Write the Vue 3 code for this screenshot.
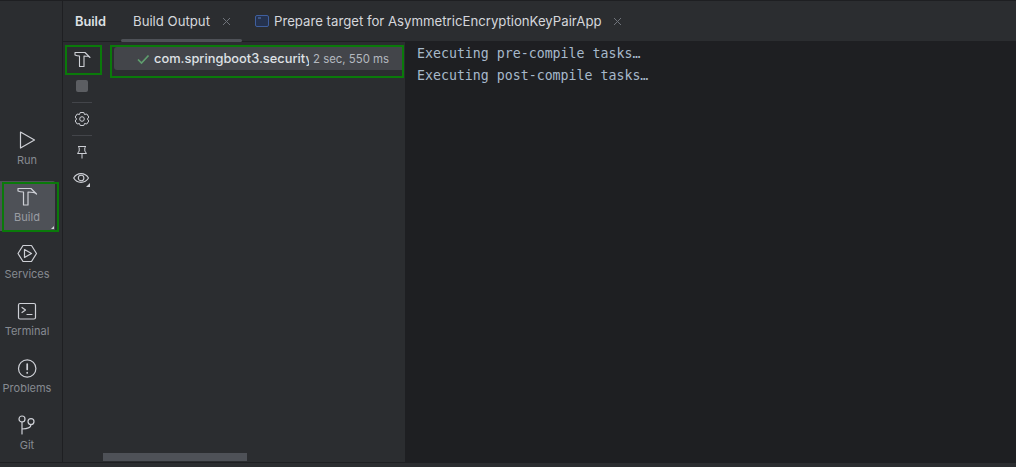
<script setup>
const railItems = [
  { label: 'Run', icon: 'run' },
  { label: 'Build', icon: 'build', active: true },
  { label: 'Services', icon: 'services' },
  { label: 'Terminal', icon: 'terminal' },
  { label: 'Problems', icon: 'problems' },
  { label: 'Git', icon: 'git' }
]
</script>

<template>
  <div class="app">
    <div class="shell">
      <nav class="rail">
        <div v-for="item in railItems" :key="item.label" class="rail-item" :class="{ active: item.active }">
          <svg class="rail-icon" width="22" height="22" viewBox="0 0 22 22" fill="none" stroke="#ced0d6" stroke-width="1.2" stroke-linejoin="round" stroke-linecap="round">
            <path v-if="item.icon === 'run'" d="M4.5 4 L18.5 12 L4.5 20 Z" />
            <path v-else-if="item.icon === 'build'" d="M2 3.5 H15 L20.5 9 C19 7.5 17 7 12 7 V20 H7.5 V7 C5 7 3 6.5 2 6 Z" />
            <template v-else-if="item.icon === 'services'">
              <path d="M7 3.5 H15.5 L20.5 11.5 L15.5 19.5 H7 L2 11.5 Z" />
              <path d="M8.5 7.5 L15.5 11.5 L8.5 15.5 Z" />
            </template>
            <template v-else-if="item.icon === 'terminal'">
              <rect x="2.5" y="4.5" width="17" height="15.5" rx="1.5" />
              <path d="M6 8.5 L9.5 11 L6 13.5 M11 15.5 H16" />
            </template>
            <template v-else-if="item.icon === 'problems'">
              <circle cx="11.2" cy="12.5" r="8.7" />
              <path d="M11.2 8 V13.5 M11.2 16.5 V16.9" stroke-width="1.7" />
            </template>
            <template v-else>
              <circle cx="6" cy="6" r="3" />
              <circle cx="15" cy="8.6" r="3" />
              <path d="M6 9 V21 M6 16 C11 16 15 15.5 15 11.6" />
            </template>
          </svg>
          <span class="rail-label">{{ item.label }}</span>
          <span v-if="item.active" class="rail-mark"></span>
        </div>
      </nav>

      <main class="panel">
        <header class="tabs">
          <span class="title">Build</span>
          <div class="tab selected">
            <span>Build Output</span>
            <svg class="close" width="9" height="9" viewBox="0 0 9 9" stroke="#6f737a" stroke-width="1"><path d="M1 1 L8 8 M8 1 L1 8" /></svg>
          </div>
          <div class="tab second">
            <svg class="tab-icon" width="14" height="12" viewBox="0 0 14 12" fill="#25324d" stroke="#3f5f9e" stroke-width="1"><rect x=".5" y=".5" width="13" height="11" rx="1.5" /><path d="M3 3 H6" stroke="#5a7bb8" /></svg>
            <span>Prepare target for AsymmetricEncryptionKeyPairApp</span>
            <svg class="close" width="9" height="9" viewBox="0 0 9 9" stroke="#6f737a" stroke-width="1"><path d="M1 1 L8 8 M8 1 L1 8" /></svg>
          </div>
        </header>

        <div class="body">
          <aside class="tools">
            <div class="hammer">
              <svg width="18" height="18" viewBox="0 0 18 18" fill="none" stroke="#ced0d6" stroke-width="1.1" stroke-linejoin="round"><path d="M1 1.5 H11 L16 6.5 C15 5.2 13 5 10 5 V15.5 H5.5 V5 C3.5 5 2 4.5 1 4 Z" /></svg>
            </div>
            <div class="stop"></div>
            <div class="sep"></div>
            <svg class="tool-icon" width="16" height="16" viewBox="0 0 16 16" fill="none" stroke="#ced0d6" stroke-width="1" stroke-linejoin="round"><path d="M6.2 1.5 H9.8 L10.5 3.5 L12.8 3 L14.8 6 L13.4 8 L14.8 10 L12.8 13 L10.5 12.5 L9.8 14.5 H6.2 L5.5 12.5 L3.2 13 L1.2 10 L2.6 8 L1.2 6 L3.2 3 L5.5 3.5 Z" /><circle cx="8" cy="8" r="2.3" /></svg>
            <div class="sep second-sep"></div>
            <svg class="tool-icon" width="16" height="16" viewBox="0 0 16 16" fill="none" stroke="#ced0d6" stroke-width="1" stroke-linejoin="round"><path d="M4 2.5 H12 L10.8 3.6 V7 L12.5 9.5 H3.5 L5.2 7 V3.6 Z M8 9.5 V14.5" /></svg>
            <div class="eye-wrap">
              <svg width="18" height="14" viewBox="0 0 18 14" fill="none" stroke="#ced0d6" stroke-width="1.1"><path d="M0.7 7 C4 1.2 12 1.2 15.5 7 C12 12.8 4 12.8 0.7 7 Z" /><circle cx="8.1" cy="7" r="2.8" /></svg>
              <span class="corner"></span>
            </div>
          </aside>

          <section class="tree">
            <div class="tree-frame">
              <div class="tree-row">
                <svg class="check" width="14" height="12" viewBox="0 0 14 12" fill="none" stroke="#5f9e6e" stroke-width="1.7"><path d="M2 6.5 L5.5 10 L12.5 2.5" /></svg>
                <span class="node">com.springboot3.security</span>
                <span class="time">2 sec, 550 ms</span>
              </div>
            </div>
            <div class="scrollbar"></div>
          </section>

          <section class="console">
            <div>Executing pre-compile tasks…</div>
            <div>Executing post-compile tasks…</div>
          </section>
        </div>
      </main>
    </div>
  </div>
</template>

<style>
html, body { margin: 0; background: #2b2d30; }
</style>

<style scoped>
.app {
  width: 1016px;
  height: 467px;
  overflow: hidden;
  background: #2b2d30;
  font-family: Inter, "Noto Sans", sans-serif;
  box-sizing: border-box;
  border-top: 1px solid #1e1f22;
}
.shell {
  height: 462px;
  box-sizing: border-box;
  display: flex;
  border-bottom: 1px solid #1e1f22;
}
.rail {
  width: 63px;
  flex: none;
  box-sizing: border-box;
  border-right: 1px solid #1e1f22;
  padding-top: 123px;
  display: flex;
  flex-direction: column;
  align-items: flex-start;
}
.rail-item {
  flex: none;
  width: 54px;
  height: 57px;
  display: flex;
  flex-direction: column;
  align-items: center;
  color: #868a91;
  font-size: 11px;
  position: relative;
}
.rail-icon { margin-top: 4px; flex: none; }
.rail-label { margin-top: 3px; line-height: 14px; white-space: nowrap; }
.rail-item.active {
  background: #4e5157;
  height: 50px;
  width: 55px;
  padding-right: 1px;
  box-sizing: border-box;
  margin-bottom: 7px;
  border-radius: 0 2px 2px 0;
  color: #9a9da3;
}
.rail-item.active::after {
  content: "";
  position: absolute;
  right: 1px;
  bottom: 2px;
  border-style: solid;
  border-width: 0 0 3px 3px;
  border-color: transparent transparent #ced0d6 transparent;
}
.rail-mark {
  position: absolute;
  left: 2px;
  top: 1px;
  width: 57px;
  height: 50px;
  box-sizing: border-box;
  border: 2px solid #0a7a0a;
}
.panel { flex: 1; min-width: 0; display: flex; flex-direction: column; }
.tabs {
  height: 41px;
  flex: none;
  display: flex;
  align-items: center;
  border-bottom: 1px solid #1e1f22;
  font-size: 13.2px;
  color: #d5d7dc;
  padding-left: 12px;
  box-sizing: border-box;
}
.title { font-weight: 600; width: 58px; color: #dfe1e5; font-size: 12.8px; }
.tab { display: flex; align-items: center; gap: 11px; height: 40px; position: relative; white-space: nowrap; }
.tab.selected { width: 122px; gap: 12px; }
.tab.selected::after {
  content: "";
  position: absolute;
  left: -12px;
  width: 121px;
  bottom: -1px;
  height: 3px;
  background: #4e5157;
  border-radius: 2px;
}
.tab-icon { margin-right: -6px; }
.body { flex: 1; min-height: 0; display: flex; }
.tools { width: 38px; flex: none; display: flex; flex-direction: column; align-items: center; }
.hammer {
  align-self: flex-start;
  margin-left: 2px;
  width: 37px;
  height: 30px;
  box-sizing: border-box;
  border: 2px solid #0a7a0a;
  margin-top: 3px;
  padding-right: 1px;
  display: flex;
  align-items: center;
  justify-content: center;
}
.stop { width: 12px; height: 12px; background: #5c5e62; border-radius: 2px; margin-top: 5px; }
.sep { width: 20px; height: 1px; background: #43454a; margin-top: 10px; }
.second-sep { margin-top: 8px; }
.tool-icon { margin-top: 8px; flex: none; }
.eye-wrap { position: relative; margin-top: 11px; line-height: 0; }
.corner {
  position: absolute;
  right: 1px;
  bottom: -2px;
  border-style: solid;
  border-width: 0 0 4px 4px;
  border-color: transparent transparent #ced0d6 transparent;
}
.tree { width: 304px; flex: none; position: relative; padding: 3px 0 0 9px; box-sizing: border-box; }
.tree-frame { width: 294px; height: 33px; box-sizing: border-box; border: 2px solid #0a7a0a; padding: 0 0 0 2px; }
.tree-row {
  height: 23px;
  width: 288px;
  background: #43454a;
  border-radius: 3px 0 0 3px;
  display: flex;
  align-items: center;
  padding-left: 22px;
  box-sizing: border-box;
  font-size: 12.85px;
  white-space: nowrap;
}
.check { flex: none; }
.node { width: 155px; margin-left: 4px; overflow: hidden; color: #dfe1e5; font-weight: 500; flex: none; }
.time { color: #b4b8bf; font-size: 11.4px; margin-left: 4px; }
.scrollbar { position: absolute; left: 2px; bottom: 1px; width: 144px; height: 8px; background: #4e5157; }
.console {
  flex: 1;
  background: #1e1f22;
  padding: 1px 0 0 12px;
  font-family: "DejaVu Sans Mono", "Liberation Mono", monospace;
  font-size: 13.25px;
  line-height: 22px;
  color: #a7b9cb;
}
</style>
